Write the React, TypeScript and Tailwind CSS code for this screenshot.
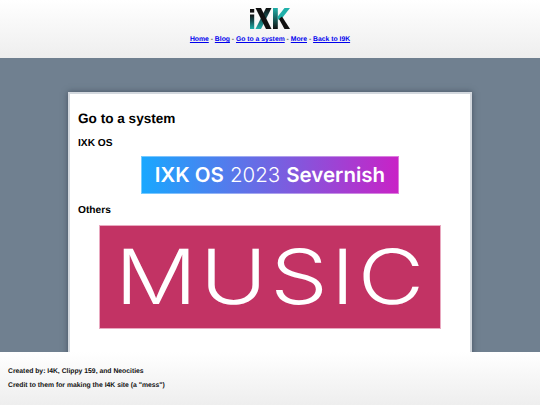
function Logo() {
  return (
    <svg width="40" height="21" viewBox="0 0 40 21" className="block">
      <defs>
        <linearGradient id="stemFade" x1="0" y1="0" x2="0" y2="1">
          <stop offset="0" stopColor="#111" />
          <stop offset="0.5" stopColor="#17595b" />
          <stop offset="1" stopColor="#1fb0aa" />
        </linearGradient>
        <linearGradient id="kFade" x1="0" y1="0" x2="0" y2="1">
          <stop offset="0" stopColor="#1fb0aa" />
          <stop offset="1" stopColor="#111" />
        </linearGradient>
      </defs>
      <rect x="0" y="1" width="4.2" height="3.6" fill="#111" />
      <rect x="0" y="6.5" width="4.2" height="14.5" fill="url(#stemFade)" />
      <polygon points="16,0 21.5,0 11,21 5.5,21" fill="url(#stemFade)" />
      <polygon points="5.5,0 11,0 21.5,21 16,21" fill="#111" />
      <rect x="23" y="0" width="4.8" height="21" fill="url(#kFade)" />
      <polygon points="27.8,8.5 34.5,0 40,0 31,11.5 27.8,11.5" fill="#1fb0aa" />
      <polygon points="29,11 32,8.5 40,21 34.5,21" fill="#111" />
    </svg>
  );
}

export default function App() {
  const links = ['Home', 'Blog', 'Go to a system', 'More', 'Back to I9K'];

  return (
    <div className="h-[405px] w-[540px] overflow-hidden flex flex-col font-['Liberation_Sans',Arial,sans-serif] text-black [text-rendering:geometricPrecision]">
      <header className="h-[58px] shrink-0 bg-gradient-to-b from-white to-[#eeeeee] flex flex-col items-center pt-2">
        <Logo />
        <nav className="mt-[6px] text-[6.8px] leading-[10px] font-bold text-[#555]">
          {links.map((link, i) => (
            <span key={link}>
              {i > 0 && ' - '}
              <a href="#" className="text-[#0000ee] underline">{link}</a>
            </span>
          ))}
        </nav>
      </header>

      <main className="flex-1 min-h-0 overflow-hidden bg-[#708090] pt-[34px] flex justify-center">
        <div className="w-[404px] h-[400px] shrink-0 bg-white border-2 border-[#d3d8de] shadow-[0_0_6px_rgba(40,50,65,0.6)] px-[8px] pt-[16px]">
          <h1 className="text-[13.6px] leading-[18px] font-bold">Go to a system</h1>
          <h2 className="mt-[9px] text-[10.2px] leading-[13px] font-bold">IXK OS</h2>
          <div className="flex justify-center mt-[6px]">
            <div className="w-[258px] h-[38px] flex items-center justify-center border border-white/40 bg-origin-border bg-linear-to-r/srgb from-[#18a8ff] to-[#c922c6] text-white text-[20.5px] font-['Inter',sans-serif]">
              <span className="font-semibold">IXK OS</span>
              <span className="ml-[6px] font-light">2023</span>
              <span className="ml-[6px] font-semibold">Severnish</span>
            </div>
          </div>
          <h2 className="mt-[10px] text-[10.2px] leading-[13px] font-bold">Others</h2>
          <div className="flex justify-center mt-[8px]">
            <div className="w-[342px] h-[104px] flex items-center justify-center border border-[#e9a9c0] bg-[#c23364] text-white text-[76px] leading-none font-['Inter',sans-serif] font-light">
              <span className="inline-block scale-x-[1.2] tracking-[2.5px] translate-x-[1px]">MUSIC</span>
            </div>
          </div>
        </div>
      </main>

      <footer className="h-[53px] shrink-0 bg-gradient-to-b from-white to-[#eeeeee] px-[8px] pt-[15px] text-[6.8px] leading-[10px] font-bold text-[#111]">
        <p>Created by: I4K, Clippy 159, and Neocities</p>
        <p className="mt-[4px]">Credit to them for making the I4K site (a "mess")</p>
      </footer>
    </div>
  );
}
